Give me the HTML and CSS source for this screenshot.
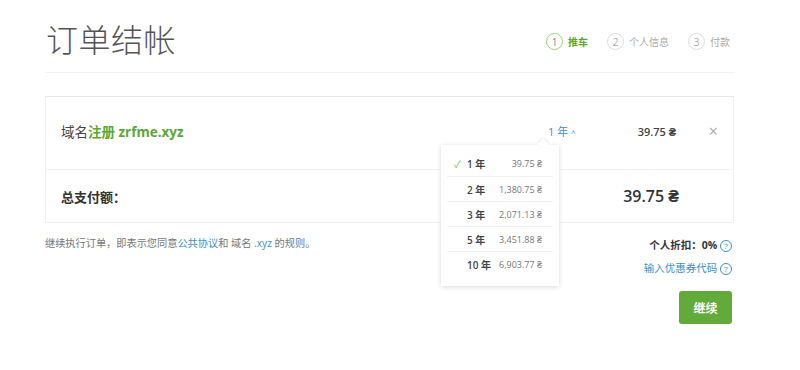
FILE: index.html
```html
<!DOCTYPE html>
<html lang="zh">
<head>
  <meta charset="UTF-8">
  <title>订单结帐</title>
  <link rel="stylesheet" href="styles.css">
</head>
<body>
  <div class="container">
    <div class="header">
      <h1>订单结帐</h1>
      <ul class="steps">
        <li class="step active"><span class="num">1</span>推车</li>
        <li class="step"><span class="num">2</span>个人信息</li>
        <li class="step"><span class="num">3</span>付款</li>
      </ul>
    </div>

    <div class="cart">
      <div class="cart-row">
        <div class="item-name">域名<span class="green">注册 zrfme.xyz</span></div>
        <div class="period">
          <span class="period-link">1 年 <span class="caret">^</span></span>
          <div class="dropdown">
            <div class="opt selected"><span class="yr"><span class="check">✓</span>1 年</span><span class="pr">39.75 ₴</span></div>
            <div class="opt"><span class="yr">2 年</span><span class="pr">1,380.75 ₴</span></div>
            <div class="opt"><span class="yr">3 年</span><span class="pr">2,071.13 ₴</span></div>
            <div class="opt"><span class="yr">5 年</span><span class="pr">3,451.88 ₴</span></div>
            <div class="opt"><span class="yr">10 年</span><span class="pr">6,903.77 ₴</span></div>
          </div>
        </div>
        <div class="price">39.75 ₴</div>
        <div class="remove">×</div>
      </div>
      <div class="cart-row total">
        <div class="total-label">总支付额：</div>
        <div class="total-price">39.75 ₴</div>
      </div>
    </div>

    <div class="footer">
      <p class="terms">继续执行订单，即表示您同意<a href="#">公共协议</a>和 域名 <a href="#">.xyz</a> 的规则。</p>
      <div class="side">
        <div class="discount">个人折扣：0% <span class="help">?</span></div>
        <a class="coupon" href="#">输入优惠券代码 <span class="help">?</span></a>
        <button class="btn">继续</button>
      </div>
    </div>
  </div>
</body>
</html>
```

FILE: styles.css
```css
body {
  margin: 0;
  font-family: "Open Sans", "Noto Sans CJK SC", sans-serif;
  background: #fff;
  color: #333;
}
.container {
  width: 690px;
  margin-left: 45px;
}
.header {
  display: flex;
  justify-content: space-between;
  align-items: flex-start;
  height: 72px;
  border-bottom: 1px solid #f2f2f2;
}
h1 {
  margin: 15px 0 0 1px;
  font-family: "Noto Sans CJK SC", sans-serif;
  font-size: 32px;
  font-weight: 300;
  color: #555;
  letter-spacing: 0.5px;
}
.steps {
  display: flex;
  gap: 19px;
  list-style: none;
  margin: 33px 5px 0 0;
  padding: 0;
}
.step {
  display: flex;
  align-items: center;
  font-size: 10px;
  color: #aaa;
}
.step .num {
  width: 15px;
  height: 15px;
  border: 1px solid #ddd;
  border-radius: 50%;
  display: inline-flex;
  align-items: center;
  justify-content: center;
  font-size: 10px;
  margin-right: 5px;
  color: #aaa;
}
.step.active {
  color: #5aa832;
  font-weight: bold;
}
.step.active .num {
  border-color: #9ccf80;
  color: #888;
  font-weight: normal;
}
.cart {
  margin-top: 23px;
  border: 1px solid #f0f0f0;
  border-top-color: #e8e8e8;
  width: 687px;
}
.cart-row {
  display: flex;
  align-items: center;
  height: 68px;
  padding: 0 15px 4px;
  font-size: 13px;
}
.cart-row + .cart-row {
  border-top: 1px solid #f3f3f3;
  height: 52px;
  padding-bottom: 0;
}
.item-name {
  flex: 1;
  font-size: 13.5px;
  color: #444;
}
.green {
  color: #5aa832;
  font-weight: bold;
}
.period {
  position: relative;
  width: 73px;
}
.period-link {
  color: #3d8fc7;
  font-size: 11px;
}
.caret {
  font-size: 8px;
}
.price {
  width: 55px;
  text-align: right;
  font-weight: 600;
  font-size: 11px;
  color: #444;
}
.remove {
  width: 42px;
  text-align: right;
  color: #aaa;
  font-size: 16px;
}
.dropdown {
  position: absolute;
  left: -107px;
  top: 23px;
  width: 106px;
  padding: 6px 6px 10px;
  background: #fff;
  box-shadow: 0 1px 5px rgba(0, 0, 0, 0.15);
  z-index: 2;
}
.dropdown::before {
  content: "";
  position: absolute;
  top: -5px;
  right: 12px;
  width: 8px;
  height: 8px;
  background: #fff;
  transform: rotate(45deg);
  box-shadow: -1px -1px 2px rgba(0, 0, 0, 0.08);
}
.opt {
  display: flex;
  justify-content: space-between;
  align-items: center;
  height: 24px;
  border-top: 1px solid #f2f2f2;
  padding: 0 11px 0 20px;
  font-size: 10px;
}
.opt:first-child {
  border-top: none;
  height: 25px;
}
.opt .yr {
  position: relative;
  font-weight: 600;
  color: #444;
}
.check {
  position: absolute;
  left: -13px;
  color: #79b85a;
  font-weight: normal;
}
.opt .pr {
  font-size: 9px;
  color: #777;
}
.total-label {
  flex: 1;
  font-weight: bold;
  color: #333;
}
.total-price {
  margin-right: 39px;
  font-size: 16px;
  font-weight: 600;
  color: #333;
}
.footer {
  display: flex;
  justify-content: space-between;
  align-items: flex-start;
  margin-top: 12px;
}
.terms {
  margin: 0;
  font-size: 10.2px;
  color: #777;
}
a {
  color: #3d8fc7;
  text-decoration: none;
}
.side {
  display: flex;
  flex-direction: column;
  align-items: flex-end;
  font-size: 10.5px;
  margin: 2px 3px 0 0;
}
.discount {
  font-weight: bold;
  color: #333;
}
.coupon {
  margin-top: 8px;
}
.help {
  display: inline-flex;
  align-items: center;
  justify-content: center;
  width: 10px;
  height: 10px;
  border: 1px solid #3d8fc7;
  border-radius: 50%;
  color: #3d8fc7;
  font-size: 8px;
  font-weight: normal;
}
.btn {
  margin-top: 16px;
  width: 53px;
  height: 33px;
  border: none;
  border-radius: 3px;
  background: #62aa3a;
  color: #fff;
  font-family: "Noto Sans CJK SC", sans-serif;
  font-size: 12px;
  font-weight: bold;
}
```
